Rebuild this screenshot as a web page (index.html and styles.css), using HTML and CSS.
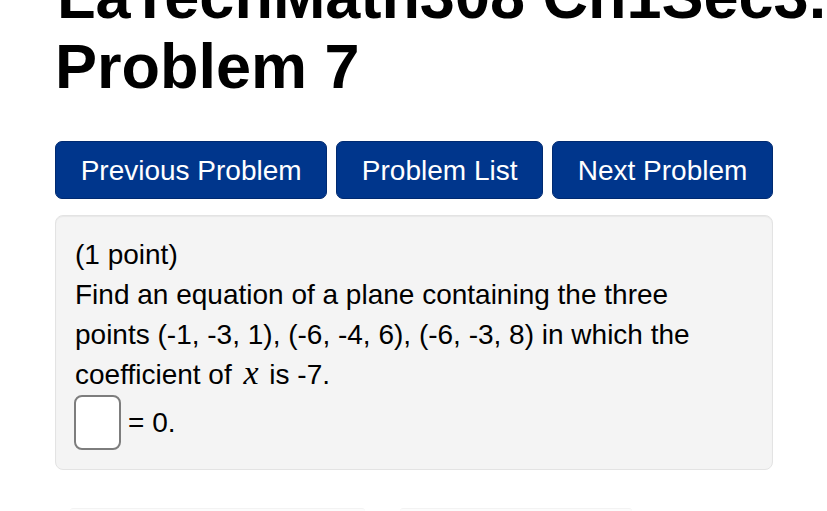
FILE: index.html
```html
<!DOCTYPE html>
<html lang="en">
<head>
<meta charset="utf-8">
<title>LaTechMath308 Ch1Sec3 Problem 7</title>
<link rel="stylesheet" href="styles.css">
</head>
<body>
<div class="page">
  <h1 class="title"><span class="set-name">LaTechMath308 Ch1Sec3.5</span> Problem 7</h1>
  <div class="nav">
    <a class="btn" href="#">Previous Problem</a>
    <a class="btn" href="#">Problem List</a>
    <a class="btn" href="#">Next Problem</a>
  </div>
  <div class="well">
    <p class="line">(1 point)</p>
    <p class="line">Find an equation of a plane containing the three points (-1, -3, 1), (-6, -4, 6), (-6, -3, 8) in which the coefficient of <span class="math">x</span> is -7.</p>
    <div class="answer">
      <input class="answer-input" type="text" aria-label="answer">
      <span>= 0.</span>
    </div>
  </div>
  <div class="below">
    <div class="below-item wide"></div>
    <div class="below-item narrow"></div>
  </div>
</div>
</body>
</html>
```
FILE: styles.css
```css
html, body {
  margin: 0;
  padding: 0;
  background: #ffffff;
  overflow: hidden;
}

body {
  font-family: "Liberation Sans", Arial, sans-serif;
  color: #000;
}

.page {
  padding: 0 54px 0 55px;
}

.title {
  margin: -39px 0 0 0;
  font-size: 63px;
  line-height: 70px;
  font-weight: bold;
}

.set-name {
  display: block;
  white-space: nowrap;
  margin-left: 2px;
}

.nav {
  display: flex;
  gap: 9px;
  margin-top: 40px;
}

.btn {
  display: block;
  flex: 1 1 auto;
  text-align: center;
  font-size: 28px;
  line-height: 40px;
  padding: 9px 24px 7px;
  color: #fff;
  text-decoration: none;
  background: #00368c;
  border: 1px solid #002a70;
  border-radius: 7px;
  white-space: nowrap;
}

.well {
  margin-top: 16px;
  background: #f4f4f4;
  border: 1px solid #e3e3e3;
  border-radius: 8px;
  padding: 19px 40px 19px 19px;
  box-shadow: inset 0 1px 1px rgba(0, 0, 0, 0.05);
  font-size: 28px;
  line-height: 40px;
}

.line {
  margin: 0;
}

.math {
  font-family: "Liberation Serif", "Times New Roman", serif;
  font-style: italic;
  font-size: 34px;
  line-height: 1;
  padding: 0 3px 0 4px;
}

.answer {
  display: flex;
  align-items: center;
  gap: 7px;
  margin-left: -1px;
}

.answer-input {
  box-sizing: border-box;
  width: 47px;
  height: 55px;
  margin: 0;
  border: 2px solid #7d7d7d;
  border-radius: 8px;
  background: #fff;
}

.below {
  display: flex;
  gap: 35px;
  margin-top: 38px;
  padding-left: 15px;
}

.below-item {
  height: 20px;
  background: #fcfcfc;
  border-top: 1px solid #f3f3f3;
  border-radius: 3px;
}

.wide {
  width: 295px;
}

.narrow {
  width: 232px;
}
```
